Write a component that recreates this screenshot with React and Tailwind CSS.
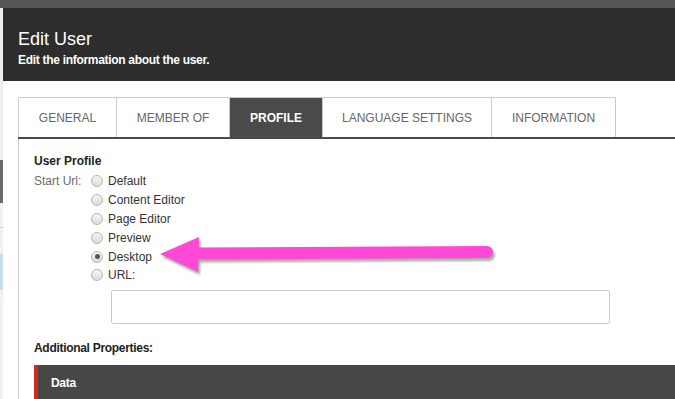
// App.jsx — "Edit User" dialog, Profile tab, with a callout arrow on "Desktop".
import React from "react";

const TABS = [
  ["GENERAL", "w-[99px]"],
  ["MEMBER OF", "w-[113px]"],
  ["PROFILE", "w-[93px]", true],
  ["LANGUAGE SETTINGS", "w-[169px]"],
  ["INFORMATION", "w-[124px]"],
];

const OPTIONS = ["Default", "Content Editor", "Page Editor", "Preview", "Desktop", "URL:"];

const Radio = ({ checked }) => (
  <span className="w-[12px] h-[12px] rounded-full border border-[#b5b5b5] bg-gradient-to-b from-[#f4f4f4] to-[#dcdcdc] flex items-center justify-center shrink-0">
    {checked && <span className="w-[5px] h-[5px] rounded-full bg-[#555]" />}
  </span>
);

const Arrow = () => (
  <svg className="absolute left-0 top-0 pointer-events-none" width="675" height="399" viewBox="0 0 675 399">
    <defs>
      <filter id="sh" x="-10%" y="-50%" width="120%" height="200%">
        <feGaussianBlur stdDeviation="1.2" />
      </filter>
    </defs>
    <g fill="#6b6b6b" stroke="#6b6b6b" opacity="0.55" filter="url(#sh)" transform="translate(2 3)">
      <polygon points="160,254 199,237 198,272" stroke="none" />
      <line x1="195" y1="253.5" x2="487" y2="252" strokeWidth="12" strokeLinecap="round" />
    </g>
    <g fill="#ff48d5" stroke="#ff48d5">
      <polygon points="160,254 199,237 198,272" stroke="none" />
      <line x1="195" y1="253.5" x2="487" y2="252" strokeWidth="12" strokeLinecap="round" />
    </g>
  </svg>
);

export default function App() {
  return (
    <div className="relative w-[675px] h-[399px] overflow-hidden bg-[#ececec]" style={{ fontFamily: "'Liberation Sans', Arial, sans-serif" }}>
      <div className="h-[8px] bg-[#555]" />
      <div className="flex h-[391px]">
        {/* sliver of the page behind the dialog */}
        <div className="w-[3px] shrink-0 flex flex-col">
          <div className="h-[152px] bg-[#eeeeee]" />
          <div className="h-[43px] bg-[#6a6a6a]" />
          <div className="h-[25px] bg-[#f2f2f2] border-b border-[#d0d0d0]" />
          <div className="h-[27px] bg-[#f2f2f2] border-b border-[#d0d0d0]" />
          <div className="h-[35px] bg-[#c9dde8]" />
          <div className="flex-1 bg-[#f2f2f2]" />
        </div>

        <div className="flex-1 flex flex-col bg-white">
          <header className="h-[73px] bg-[#2d2d2d] px-[15px] pt-[20px] text-white shrink-0">
            <h1 className="text-[18px] leading-[22px]">Edit User</h1>
            <p className="text-[12px] leading-[14px] mt-[3px] font-semibold tracking-[-0.3px]">Edit the information about the user.</p>
          </header>

          <div className="flex-1 pl-[15px] pt-[16px] flex flex-col min-h-0">
            <nav className="flex h-[40px] border-b-2 border-[#4a4a4a] box-content">
              {TABS.map(([label, w, active]) => (
                <div key={label}
                     className={`${w} h-[40px] flex items-center justify-center text-[12px] border-t border-r border-[#cccccc] first:border-l ${
                       active ? "bg-[#4a4a4a] border-[#4a4a4a] text-white font-bold" : "text-[#666]"}`}>
                  {label}
                </div>
              ))}
            </nav>

            <section className="flex-1 border-l border-[#cccccc] pl-[15px] pt-[15px]">
              <h2 className="text-[12px] leading-[14px] font-bold text-[#222]">User Profile</h2>
              <div className="flex mt-[4px]">
                <span className="w-[57px] text-[12px] leading-[19px] text-[#6a6a6a]">Start Url:</span>
                <div className="flex flex-col">
                  {OPTIONS.map((o) => (
                    <label key={o} className="h-[18.8px] flex items-center gap-[5px] text-[12px] text-[#333]">
                      <Radio checked={o === "Desktop"} />
                      {o}
                    </label>
                  ))}
                </div>
              </div>
              <div className="ml-[77px] mt-[5px] w-[499px] h-[34px] border border-[#cccccc] rounded-[2px]" />
              <h2 className="mt-[17px] text-[12px] leading-[14px] font-bold text-[#222] tracking-[-0.3px]">Additional Properties:</h2>
              <div className="mt-[10px] h-[36px] bg-[#474747] border-l-4 border-[#d42a20] pl-[13px] flex items-center">
                <span className="text-white text-[12px] font-bold tracking-[-0.3px]">Data</span>
              </div>
            </section>
          </div>
        </div>
      </div>
      <Arrow />
    </div>
  );
}
